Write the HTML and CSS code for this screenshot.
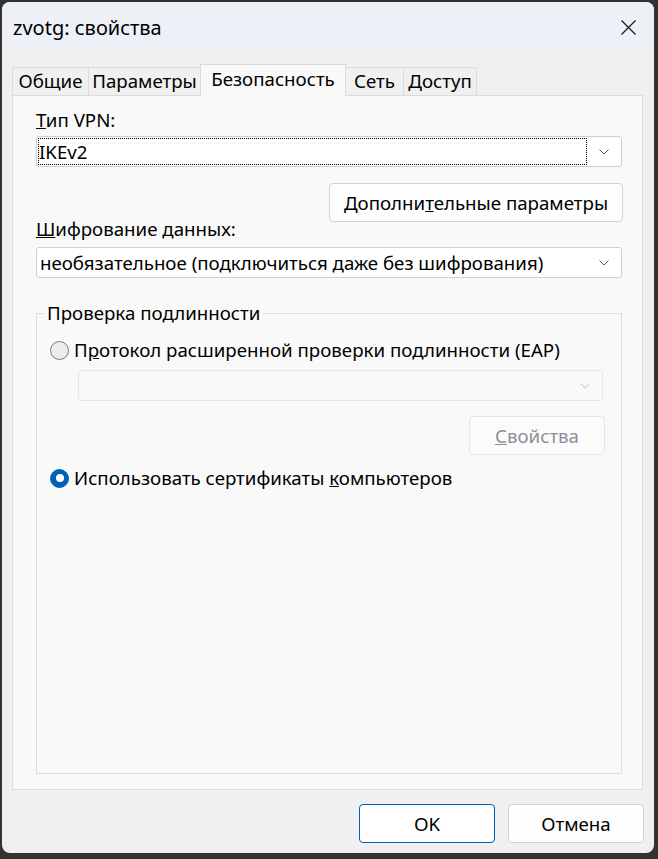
FILE: index.html
```html
<!DOCTYPE html>
<html lang="ru">
<head>
    <meta charset="UTF-8">
    <meta name="viewport" content="width=device-width, initial-scale=1.0">
    <title>zvotg: свойства</title>
    <link rel="stylesheet" href="styles.css">
</head>
<body>
    <div class="window">
        <div class="titlebar">
            <span class="title">zvotg: свойства</span>
            <svg class="close" viewBox="0 0 15 15" width="15" height="15">
                <path d="M0.5 0.5 L14.5 14.5 M14.5 0.5 L0.5 14.5" stroke="#1a1a1a" stroke-width="1.3" fill="none"/>
            </svg>
        </div>

        <div class="tabs">
            <div class="tab tab-general">Общие</div>
            <div class="tab tab-options">Параметры</div>
            <div class="tab tab-security tab-active">Безопасность</div>
            <div class="tab tab-network">Сеть</div>
            <div class="tab tab-sharing">Доступ</div>
        </div>

        <div class="panel">
            <div class="label label-first"><u>Т</u>ип VPN:</div>
            <div class="combo">
                <div class="combo-value combo-focus">IKEv2</div>
                <div class="combo-arrow">
                    <svg viewBox="0 0 10 6" width="10" height="6"><path d="M0.5 0.5 L5 5 L9.5 0.5" stroke="#606060" stroke-width="1" fill="none"/></svg>
                </div>
            </div>

            <button class="btn btn-advanced">Дополни<u>т</u>ельные параметры</button>

            <div class="label label-second"><u>Ш</u>ифрование данных:</div>
            <div class="combo">
                <div class="combo-value">необязательное (подключиться даже без шифрования)</div>
                <div class="combo-arrow">
                    <svg viewBox="0 0 10 6" width="10" height="6"><path d="M0.5 0.5 L5 5 L9.5 0.5" stroke="#606060" stroke-width="1" fill="none"/></svg>
                </div>
            </div>

            <fieldset class="group">
                <legend>Проверка подлинности</legend>

                <div class="radio-row">
                    <span class="radio"></span>
                    <span>П<u>р</u>отокол расширенной проверки подлинности (EAP)</span>
                </div>

                <div class="combo combo-disabled">
                    <div class="combo-value"></div>
                    <div class="combo-arrow">
                        <svg viewBox="0 0 10 6" width="10" height="6"><path d="M0.5 0.5 L5 5 L9.5 0.5" stroke="#c2c2c2" stroke-width="1" fill="none"/></svg>
                    </div>
                </div>

                <button class="btn btn-disabled"><u>С</u>войства</button>

                <div class="radio-row radio-row-last">
                    <span class="radio radio-checked"></span>
                    <span>Использовать сертификаты <u>к</u>омпьютеров</span>
                </div>
            </fieldset>
        </div>

        <div class="actions">
            <button class="btn btn-dialog btn-default">OK</button>
            <button class="btn btn-dialog">Отмена</button>
        </div>
    </div>
</body>
</html>
```

FILE: styles.css
```css
body {
    margin: 0;
    background-color: #333333;
    font-family: "Noto Sans", "Segoe UI", sans-serif;
    font-size: 18.7px;
    color: #000;
}

.window {
    margin: 2px 0 0 2px;
    width: 652px;
    height: 851px;
    background-color: #f0f0f0;
    border-radius: 8px;
    overflow: hidden;
    display: flex;
    flex-direction: column;
}

.titlebar {
    flex: none;
    height: 50px;
    background-color: #eef0f7;
    display: flex;
    align-items: center;
    justify-content: space-between;
    padding: 0 18px 0 11px;
}

.title {
    font-size: 20px;
    line-height: 24px;
    padding-top: 2px;
}

.close {
    display: block;
}

/* tab strip */
.tabs {
    flex: none;
    display: flex;
    align-items: flex-start;
    height: 32px;
    margin: 12px 0 -1px 10px;
    position: relative;
    z-index: 1;
}

.tab {
    box-sizing: border-box;
    height: 28px;
    margin-top: 3px;
    margin-right: -1px;
    padding-top: 2px;
    line-height: 22px;
    text-align: center;
    border: 1px solid #dcdcdc;
    border-bottom: none;
    background-color: #f0f0f0;
    white-space: nowrap;
}

.tab-general { width: 77px; }
.tab-options { width: 113px; }
.tab-security { width: 146px; }
.tab-network { width: 59px; }
.tab-sharing { width: 74px; }

.tab-active {
    height: 32px;
    margin-top: 0;
    padding-top: 3px;
    background-color: #f9f9f9;
    border-color: #d9d9d9;
}

/* page */
.panel {
    flex: 1;
    display: flex;
    flex-direction: column;
    margin: 0 11px 0 10px;
    padding: 13px 20px 15px 23px;
    border: 1px solid #dcdcdc;
    background-color: #f9f9f9;
}

.label {
    line-height: 22px;
}

.label-first {
    margin-bottom: 5px;
}

.label-second {
    margin-top: -4px;
    margin-bottom: 7px;
}

.combo {
    box-sizing: border-box;
    height: 31px;
    display: flex;
    border: 1px solid #cfcfcf;
    border-radius: 3px;
    background-color: #fff;
}

.combo-value {
    flex: 1;
    margin: 1px 0 1px 1px;
    padding-left: 1px;
    line-height: 25px;
    border: 1px solid transparent;
    white-space: nowrap;
}

.combo-focus {
    border: 1px dotted #000;
    padding-left: 0;
}

.combo-arrow {
    width: 34px;
    display: flex;
    align-items: center;
    justify-content: center;
    padding-top: 1px;
}

.combo-disabled {
    margin: 9px 18px 0 41px;
    border-color: #e6e6e6;
    background-color: #f9f9f9;
}

.btn {
    box-sizing: border-box;
    height: 39px;
    padding: 0 16px;
    font-family: inherit;
    font-size: 18.7px;
    color: #000;
    background-color: #fdfdfd;
    border: 1px solid #d2d2d2;
    border-radius: 4px;
}

.btn-advanced {
    align-self: flex-end;
    width: 294px;
    padding: 0;
    margin: 16px -1px 0 0;
}

.btn-disabled {
    align-self: flex-end;
    width: 136px;
    margin: 15px 16px 0 0;
    color: #8b8f96;
    background-color: #fbfbfb;
    border-color: #e6e6e6;
}

/* group box */
.group {
    flex: 1;
    margin: 24px 0 0 0;
    padding: 0;
    border: 1px solid #dcdcdc;
    display: flex;
    flex-direction: column;
}

.group legend {
    margin-left: 7px;
    padding: 0 3px;
    line-height: 22px;
}

.radio-row {
    display: flex;
    align-items: center;
    margin: 15px 0 0 13px;
    line-height: 22px;
    white-space: nowrap;
}

.radio-row-last {
    margin-top: 12px;
}

.radio {
    box-sizing: border-box;
    width: 19px;
    height: 19px;
    margin-right: 5px;
    border: 1px solid #7a7a7a;
    border-radius: 50%;
    background-color: #ededed;
    display: flex;
    align-items: center;
    justify-content: center;
}

.radio-checked {
    border-color: #005fb8;
    background-color: #005fb8;
}

.radio-checked::after {
    content: "";
    width: 8px;
    height: 8px;
    border-radius: 50%;
    background-color: #fff;
}

/* dialog buttons */
.actions {
    flex: none;
    display: flex;
    justify-content: flex-end;
    gap: 13px;
    padding: 14px 10px 10px 0;
}

.btn-dialog {
    width: 136px;
    padding: 0;
}

.btn-default {
    border-color: #005fb8;
    background-color: #fff;
}
```
